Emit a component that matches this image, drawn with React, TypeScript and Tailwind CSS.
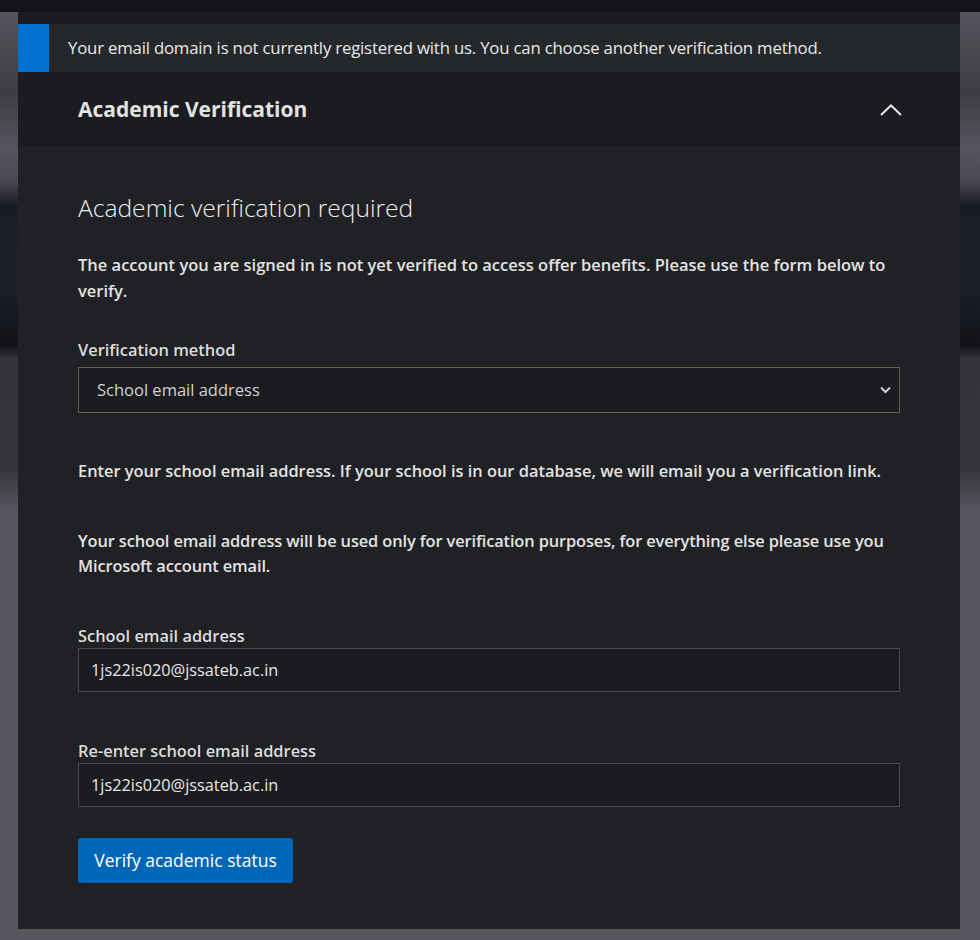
const font = { fontFamily: '"Open Sans", "Noto Sans", Arial, sans-serif' };

export default function App() {
  return (
    <div
      className="min-h-[940px] w-[980px] bg-[linear-gradient(to_bottom,#141518_0px,#141518_12px,#55555e_12px,#3c3c42_90px,#55555e_150px,#4a4a52_180px,#1b1d26_205px,#1c1f2a_290px,#121318_345px,#35343a_360px,#36353b_470px,#56565f_510px,#56565f_940px)]"
      style={font}
    >
      <div className="h-[12px] bg-[#141518]" />
      <div className="mx-[18px] flex w-[942px] flex-col bg-[#1b1c1f] pt-[12px]">
        {/* notice */}
        <div className="flex h-[48px] items-center bg-[#25282b]">
          <div className="h-full w-[31px] bg-[#0173cf]" />
          <p className="ml-[19px] whitespace-nowrap text-[16.8px] tracking-[-0.2px] text-[#e8e8e8]">
            Your email domain is not currently registered with us. You can choose another verification method.
          </p>
        </div>

        {/* accordion header */}
        <div className="flex h-[74px] items-center justify-between pl-[60px] pr-[58px] pt-[2px]">
          <h2 className="text-[21px] font-bold text-[#e2e2e2]">Academic Verification</h2>
          <svg width="22" height="12" viewBox="0 0 22 12" fill="none">
            <path d="M1 11L11 1.5L21 11" stroke="#e6e6e6" strokeWidth="2" />
          </svg>
        </div>

        {/* body */}
        <div className="flex flex-col bg-[#202124] px-[60px] pb-[46px] pt-[46px] text-[#e3e3e3]">
          <h3 className="text-[24.6px] font-light leading-[32px] text-[#eeeeee]">
            Academic verification required
          </h3>
          <p className="mt-[28px] text-[16.5px] font-semibold leading-[26px]">
            The account you are signed in is not yet verified to access offer benefits. Please use the form below to verify.
          </p>

          <label className="mt-[34px] text-[16.4px] font-semibold leading-[24px] text-[#dcdcdc]">
            Verification method
          </label>
          <div className="relative mt-[5px]">
            <select
              defaultValue="school"
              className="h-[46px] w-full appearance-none rounded-none border border-[#625c53] bg-[#1b1c1f] pl-[18px] text-[16.5px] text-[#d2d2d2] outline-none"
            >
              <option value="school">School email address</option>
            </select>
            <svg
              className="pointer-events-none absolute right-[9px] top-[19px]"
              width="11"
              height="8"
              viewBox="0 0 11 8"
              fill="none"
            >
              <path d="M1 1.5l4.5 4.5L10 1.5" stroke="#cfcfcf" strokeWidth="2" />
            </svg>
          </div>

          <p className="mt-[45px] text-[16.4px] font-semibold leading-[25px]">
            Enter your school email address. If your school is in our database, we will email you a verification link.
          </p>
          <p className="mt-[45px] text-[16.4px] font-semibold leading-[25px] tracking-[-0.12px]">
            Your school email address will be used only for verification purposes, for everything else please use you Microsoft account email.
          </p>

          <label className="mt-[46px] text-[16.4px] font-semibold leading-[24px] text-[#dcdcdc]">
            School email address
          </label>
          <input
            defaultValue="1js22is020@jssateb.ac.in"
            className="h-[44px] w-full border border-[#4a4a4c] bg-[#1b1c1f] px-[12px] text-[16.3px] text-[#e8e8e8] outline-none"
          />

          <label className="mt-[47px] text-[16.4px] font-semibold leading-[24px] text-[#dcdcdc]">
            Re-enter school email address
          </label>
          <input
            defaultValue="1js22is020@jssateb.ac.in"
            className="h-[44px] w-full border border-[#4a4a4c] bg-[#1b1c1f] px-[12px] text-[16.3px] text-[#e8e8e8] outline-none"
          />

          <div className="mt-[31px]">
            <button className="h-[45px] w-[215px] rounded-[3px] bg-[#0067b8] text-[17.5px] text-white">
              Verify academic status
            </button>
          </div>
        </div>
      </div>
    </div>
  );
}
